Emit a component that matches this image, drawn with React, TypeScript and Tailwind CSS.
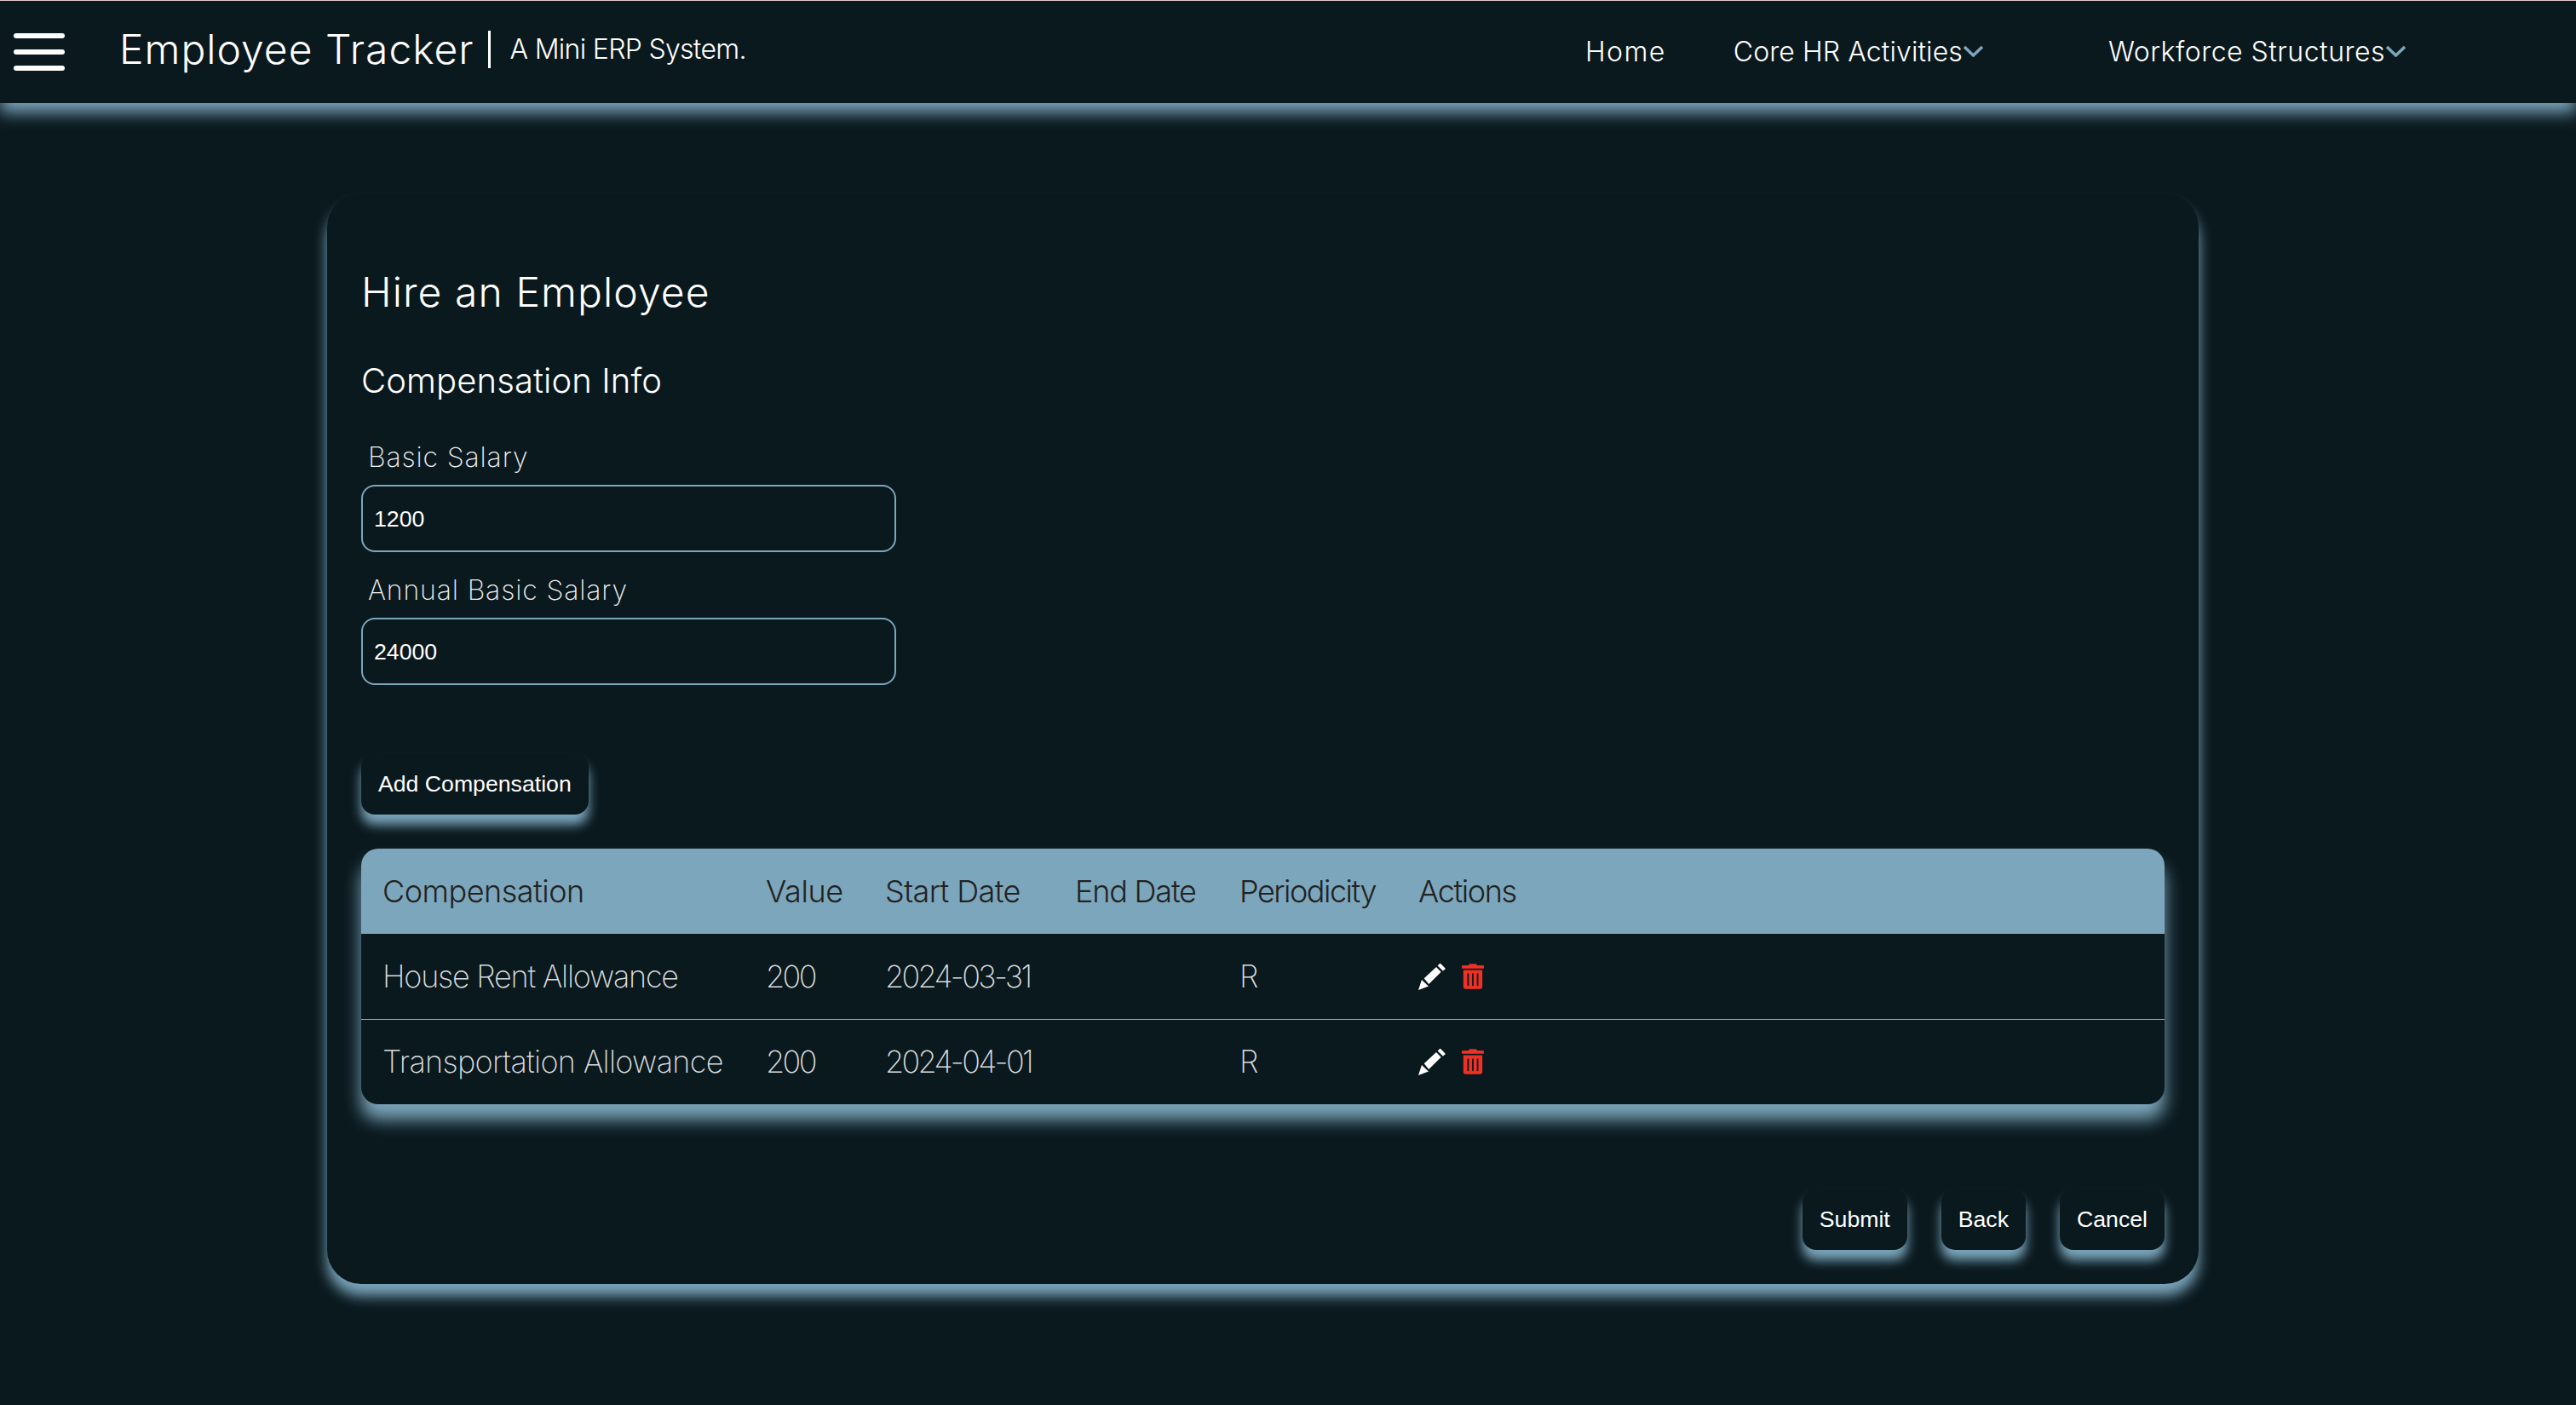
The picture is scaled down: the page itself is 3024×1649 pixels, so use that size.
import React from 'react';
import { FaTrashAlt } from 'react-icons/fa';

interface RowType {
  name: string;
  nameClass: string;
  value: string;
  start: string;
  end: string;
  periodicity: string;
}

const rows: RowType[] = [
  { name: 'House Rent Allowance', nameClass: 'tracking-[-1.25px]', value: '200', start: '2024-03-31', end: '', periodicity: 'R' },
  { name: 'Transportation Allowance', nameClass: 'tracking-[-0.7px]', value: '200', start: '2024-04-01', end: '', periodicity: 'R' },
];

const Chevron: React.FC = () => (
  <svg width="25" height="14" viewBox="0 0 25 14" fill="none" className="mt-[-2px]">
    <path d="M2 2 L12.5 12 L23 2" stroke="#7ca6bc" strokeWidth="3.5" />
  </svg>
);

const Pencil: React.FC = () => (
  <svg width="32" height="32" viewBox="0 0 32 32" fill="#ffffff">
    <path d="M0 32 L4 20 L12 27.5 Z" />
    <path d="M6.7 18.3 L21 5 L26.7 10.7 L12.3 25 Z" />
    <path d="M22.7 3.4 L25 1 Q25.6 .5 26.2 1 L31.4 6.2 Q32 6.9 31.4 7.5 L28.9 9.5 Z" />
  </svg>
);

const ActionButton: React.FC<{ label: string }> = ({ label }) => (
  <button className="block h-[72px] px-[20px] rounded-[16px] bg-[#0a191e] text-white text-[26.67px] font-['Liberation_Sans',sans-serif] shadow-[0_12px_13px_#7ca6bc]">
    {label}
  </button>
);

const Field: React.FC<{ label: string; value: string; className: string }> = ({ label, value, className }) => (
  <div className={className}>
    <label className="block h-[48px] mb-[8px] pl-[8px] text-[32px] leading-[48px] font-extralight tracking-[0.85px] text-[#f0f0f0]">{label}</label>
    <input
      readOnly
      defaultValue={value}
      className="block w-[628px] h-[79px] px-[13px] pt-[1px] border-2 border-[#7ca6bc] rounded-[16px] bg-[#0a191e] text-white text-[26.67px] font-['Liberation_Sans',sans-serif] outline-none"
    />
  </div>
);

export default function App() {
  return (
    <div className="min-h-screen bg-[#0a191e] font-['Inter',sans-serif] text-white">
      <header className="relative h-[121px] flex items-center border-t border-[#e3c9cc] bg-[#0a191e] shadow-[0_11px_18px_#7ca6bc]">
        <div className="ml-[16px] w-[60px] flex flex-col gap-[13px]">
          <span className="block h-[6px] rounded-full bg-white" />
          <span className="block h-[6px] rounded-full bg-white" />
          <span className="block h-[6px] rounded-full bg-white" />
        </div>
        <div className="ml-[64px] flex items-center mt-[-6px]">
          <span className="text-[48px] leading-[72px] font-light tracking-[1px]">Employee Tracker</span>
          <span className="ml-[16px] w-[3px] h-[44px] bg-white" />
          <span className="ml-[23px] text-[32px] leading-[48px] font-light tracking-[-0.7px]">A Mini ERP System.</span>
        </div>
        <nav className="ml-auto mr-[199px] flex items-center text-[32px] leading-[48px] font-light">
          <a className="tracking-[1.4px]">Home</a>
          <a className="ml-[79px] flex items-center tracking-[0.1px]">Core HR Activities<Chevron /></a>
          <a className="ml-[146px] flex items-center tracking-[0.5px]">Workforce Structures<Chevron /></a>
        </nav>
      </header>

      <main className="pt-[106px] pl-[384px] pb-[142px]">
        <section className="w-[2197px] rounded-[40px] bg-[#0a191e] px-[40px] pt-[80px] pb-[40px] shadow-[0_14px_16px_#7ca6bc]">
          <h1 className="text-[48px] leading-[72px] font-light tracking-[1.1px]">Hire an Employee</h1>
          <h2 className="mt-[38px] text-[40px] leading-[60px] font-light tracking-[0.1px]">Compensation Info</h2>
          <Field label="Basic Salary" value="1200" className="mt-[36px]" />
          <Field label="Annual Basic Salary" value="24000" className="mt-[21px]" />
          <div className="mt-[80px]">
            <ActionButton label="Add Compensation" />
          </div>

          <div className="mt-[40px] rounded-[20px] overflow-hidden shadow-[0_18px_20px_#7ca6bc]">
            <table className="w-full table-fixed border-collapse text-[36px] font-light">
              <thead>
                <tr className="h-[100px] bg-[#7ca6bc] text-[#222222] text-left">
                  <th className="w-[475px] pl-[25px] font-light tracking-[-0.5px]">Compensation</th>
                  <th className="w-[140px] font-light tracking-[-0.4px]">Value</th>
                  <th className="w-[223px] font-light tracking-[-0.6px]">Start Date</th>
                  <th className="w-[193px] font-light tracking-[-1.2px]">End Date</th>
                  <th className="w-[210px] font-light tracking-[-1.5px]">Periodicity</th>
                  <th className="font-light tracking-[-1.4px]">Actions</th>
                </tr>
              </thead>
              <tbody>
                {rows.map((row, i) => (
                  <tr key={row.name} className={`h-[100px] text-[#d9dcdd] font-extralight ${i > 0 ? 'border-t border-[#7ca6bc]' : ''}`}>
                    <td className={`pl-[25px] ${row.nameClass}`}>{row.name}</td>
                    <td className="tracking-[-2.6px]">{row.value}</td>
                    <td className="tracking-[-2.7px]">{row.start}</td>
                    <td>{row.end}</td>
                    <td>{row.periodicity}</td>
                    <td>
                      <div className="flex items-center gap-[19px]">
                        <Pencil />
                        <FaTrashAlt className="w-[26px] h-[30px] text-[#ee3124]" />
                      </div>
                    </td>
                  </tr>
                ))}
              </tbody>
            </table>
          </div>

          <div className="mt-[99px] flex justify-end gap-[40px]">
            <ActionButton label="Submit" />
            <ActionButton label="Back" />
            <ActionButton label="Cancel" />
          </div>
        </section>
      </main>
    </div>
  );
}
